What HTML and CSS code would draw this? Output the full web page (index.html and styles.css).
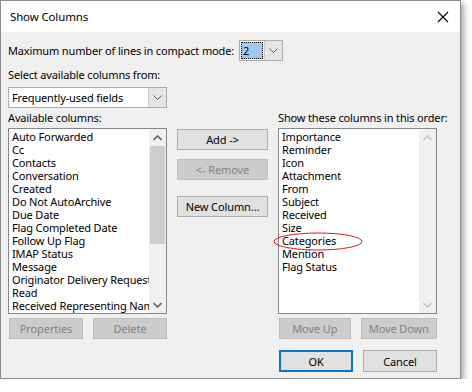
FILE: index.html
```html
<!DOCTYPE html>
<html lang="en">
<head>
    <meta charset="UTF-8">
    <title>Show Columns</title>
    <link rel="stylesheet" href="styles.css">
</head>
<body>
    <div class="dialog">
        <div class="titlebar">
            <span class="title">Show Columns</span>
            <svg class="close" width="12" height="12" viewBox="0 0 12 12">
                <path d="M1 1L11 11M11 1L1 11" stroke="#000" stroke-width="1.1" fill="none"/>
            </svg>
        </div>
        <div class="content">
            <div class="lines-row">
                <span>Maximum number of lines in compact mode:</span>
                <div class="combo small">
                    <span class="combo-value selected">2</span>
                    <span class="combo-btn"><svg width="9" height="5" viewBox="0 0 9 5"><path d="M0.5 0.5L4.5 4.5L8.5 0.5" stroke="#606060" fill="none"/></svg></span>
                </div>
            </div>
            <div class="label from-label">Select available columns from:</div>
            <div class="combo wide">
                <span class="combo-value">Frequently-used fields</span>
                <span class="combo-btn"><svg width="9" height="5" viewBox="0 0 9 5"><path d="M0.5 0.5L4.5 4.5L8.5 0.5" stroke="#606060" fill="none"/></svg></span>
            </div>

            <div class="columns">
                <div class="label">Available columns:</div>
                <div></div>
                <div class="label">Show these columns in this order:</div>

                <div class="listbox">
                    <ul class="items">
                        <li>Auto Forwarded</li>
                        <li>Cc</li>
                        <li>Contacts</li>
                        <li>Conversation</li>
                        <li>Created</li>
                        <li>Do Not AutoArchive</li>
                        <li>Due Date</li>
                        <li>Flag Completed Date</li>
                        <li>Follow Up Flag</li>
                        <li>IMAP Status</li>
                        <li>Message</li>
                        <li>Originator Delivery Requested</li>
                        <li>Read</li>
                        <li>Received Representing Name</li>
                    </ul>
                    <div class="scrollbar">
                        <span class="arrow"><svg width="9" height="6" viewBox="0 0 9 6"><path d="M0.5 5L4.5 1L8.5 5" stroke="#606060" stroke-width="1.6" fill="none"/></svg></span>
                        <div class="track"><div class="thumb"></div></div>
                        <span class="arrow"><svg width="9" height="6" viewBox="0 0 9 6"><path d="M0.5 1L4.5 5L8.5 1" stroke="#606060" stroke-width="1.6" fill="none"/></svg></span>
                    </div>
                </div>

                <div class="middle">
                    <button class="btn">Add -&gt;</button>
                    <button class="btn disabled">&lt;- Remove</button>
                    <button class="btn new-col">New Column...</button>
                </div>

                <div class="listbox shown">
                    <ul class="items">
                        <li>Importance</li>
                        <li>Reminder</li>
                        <li>Icon</li>
                        <li>Attachment</li>
                        <li>From</li>
                        <li>Subject</li>
                        <li>Received</li>
                        <li>Size</li>
                        <li>Categories</li>
                        <li>Mention</li>
                        <li>Flag Status</li>
                    </ul>
                    <div class="scrollbar off">
                        <span class="arrow"><svg width="9" height="6" viewBox="0 0 9 6"><path d="M0.5 5L4.5 1L8.5 5" stroke="#c4c4c4" stroke-width="1.6" fill="none"/></svg></span>
                        <div class="track"></div>
                        <span class="arrow"><svg width="9" height="6" viewBox="0 0 9 6"><path d="M0.5 1L4.5 5L8.5 1" stroke="#c4c4c4" stroke-width="1.6" fill="none"/></svg></span>
                    </div>
                    <svg class="mark" width="90" height="19" viewBox="0 0 90 19">
                        <ellipse cx="45" cy="9.5" rx="44" ry="8.5" stroke="#e8141b" stroke-width="1" fill="none"/>
                    </svg>
                </div>

                <div class="btn-pair">
                    <button class="btn disabled">Properties</button>
                    <button class="btn disabled">Delete</button>
                </div>
                <div></div>
                <div class="btn-pair right">
                    <button class="btn disabled">Move Up</button>
                    <button class="btn disabled wider">Move Down</button>
                </div>
            </div>

            <div class="footer">
                <button class="btn default">OK</button>
                <button class="btn">Cancel</button>
            </div>
        </div>
    </div>
</body>
</html>
```

FILE: styles.css
```css
body {
    margin: 0;
    background: #ffffff;
    font-family: "Noto Sans", "Liberation Sans", sans-serif;
    font-size: 11px;
    letter-spacing: -0.15px;
    color: #000000;
}
.dialog {
    width: 459px;
    height: 377px;
    background: #f0f0f0;
    border: 1px solid #8c8c8c;
    box-shadow: 3px 3px 6px rgba(0, 0, 0, 0.35);
}
.titlebar {
    height: 31px;
    background: #ffffff;
    display: flex;
    align-items: center;
    justify-content: space-between;
    padding: 0 11px 0 9px;
}
.title {
    font-size: 11.5px;
}
.content {
    padding: 8px 7px 0 7px;
}
.lines-row {
    display: flex;
    align-items: center;
    gap: 5px;
    height: 21px;
}
.combo {
    display: flex;
    height: 19px;
    border: 1px solid #acacac;
    background: #ffffff;
    box-sizing: content-box;
}
.combo.small {
    width: 42px;
    padding: 0;
}
.combo.wide {
    width: 157px;
}
.combo-value {
    flex: 1;
    line-height: 19px;
    padding-left: 3px;
}
.combo-value.selected {
    margin: 1px 1px 1px 1px;
    padding-left: 1px;
    line-height: 15px;
    background: #9ccaf2;
    border: 1px dotted #000000;
}
.combo-btn {
    width: 17px;
    display: flex;
    align-items: center;
    justify-content: center;
    background: #e5e5e5;
    border-left: 1px solid #c8c8c8;
}
.label {
    height: 15px;
    line-height: 15px;
    white-space: nowrap;
}
.from-label {
    margin: 6px 0 5px 0;
}
.columns {
    display: grid;
    grid-template-columns: 159px 91px 159px;
    grid-template-rows: 15px 186px 22px;
    column-gap: 10px;
    row-gap: 3px;
    margin-top: 2px;
}
.columns .label {
    align-self: end;
}
.listbox {
    position: relative;
    display: flex;
    background: #ffffff;
    border: 1px solid #828790;
    box-sizing: border-box;
}
.items {
    flex: 1;
    list-style: none;
    margin: 0;
    padding: 1px 0 0 3px;
    overflow: hidden;
    white-space: nowrap;
}
.items li {
    height: 13px;
    line-height: 13px;
}
.scrollbar {
    width: 17px;
    display: flex;
    flex-direction: column;
    background: #f0f0f0;
}
.arrow {
    height: 17px;
    display: flex;
    align-items: center;
    justify-content: center;
    flex-shrink: 0;
}
.track {
    flex: 1;
}
.thumb {
    margin: 0 1px;
    height: 98px;
    background: #cdcdcd;
}
.mark {
    position: absolute;
    left: -6px;
    top: 103px;
}
.middle {
    display: flex;
    flex-direction: column;
    gap: 9px;
    padding-top: 1px;
}
.btn {
    height: 21px;
    padding: 0;
    font-family: inherit;
    font-size: 11px;
    letter-spacing: -0.1px;
    color: #000000;
    background: #e1e1e1;
    border: 1px solid #adadad;
}
.middle .btn {
    width: 91px;
}
.middle .new-col {
    margin-top: 7px;
}
.btn.disabled {
    color: #838383;
    background: #cccccc;
    border-color: #bfbfbf;
}
.btn-pair {
    display: flex;
    gap: 10px;
    padding-left: 1px;
    align-items: flex-end;
}
.btn-pair .btn {
    width: 74px;
}
.btn-pair .wider {
    width: 79px;
}
.footer {
    display: flex;
    gap: 10px;
    margin: 11px 0 0 271px;
}
.footer .btn {
    width: 74px;
    height: 22px;
}
.btn.default {
    border: 2px solid #0078d7;
}
```
